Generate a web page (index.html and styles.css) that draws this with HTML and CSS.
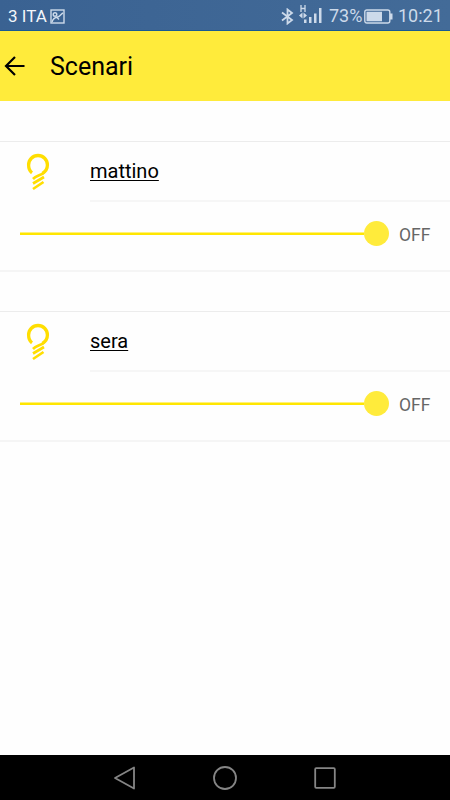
FILE: index.html
```html
<!DOCTYPE html>
<html lang="it">
<head>
    <meta charset="utf-8">
    <title>Scenari</title>
    <link rel="stylesheet" href="styles.css">
</head>
<body>
    <!-- status bar -->
    <div class="status-bar">
        <span class="carrier">3 ITA</span>
        <svg class="picture" width="15" height="15" viewBox="0 0 15 15">
            <rect x="1" y="1" width="13" height="13"/>
            <circle cx="5" cy="5.5" r="1.8"/>
            <path d="M2 13C3 9.500 5 8.500 7.500 8C10 7.500 11 5 13 4M7 8.500L9 10.500"/>
        </svg>
        <svg class="bluetooth" width="13" height="17" viewBox="0 0 13 17">
            <path d="M1 4.500L11 12L6.500 15.500V1.500L11 5L1 12.500"/>
        </svg>
        <svg class="signal" width="24" height="19" viewBox="0 0 24 19">
            <path d="M2 0V7M6 0V7M2 3.500H6" stroke-width="1.300"/>
            <path class="fill" d="M0 10.500L3.500 7.500V13.500ZM8 10.500L4.500 7.500V13.500ZM5 14.500H7.500V18H5ZM10 12H12.500V18H10ZM15 8.500H17.500V18H15ZM20 3H22.500V18H20Z"/>
        </svg>
        <span class="percent">73%</span>
        <svg class="battery" width="29" height="15" viewBox="0 0 29 15">
            <rect x="0.800" y="1" width="25" height="13" rx="2"/>
            <path class="fill" d="M2.500 2.800H18V12.200H2.500ZM26 4.500H28.500V10.500H26Z"/>
        </svg>
        <span class="clock">10:21</span>
    </div>

    <!-- header -->
    <header class="header">
        <svg class="back" width="22" height="22" viewBox="0 0 22 22">
            <path d="M20.500 11H2M11 2L2 11L11 20"/>
        </svg>
        <h1>Scenari</h1>
    </header>

    <!-- scenari -->
    <main class="content">
        <div class="card">
            <div class="card-title">
                <svg class="bulb" width="24" height="38" viewBox="0 0 24 38">
                    <path d="M6 19.800C3.500 18 2.600 15 2.600 12A9.400 9.500 0 0 1 21.400 12C21.400 15.500 19.800 18.300 16.500 20.300"/>
                    <path d="M18 19.500C14.500 22.800 10.500 22.500 7 26M18 24L7 30.500M17.500 29L7 36" stroke-width="2.700"/>
                </svg>
                <a class="name">mattino</a>
            </div>
            <div class="card-slider">
                <div class="slider">
                    <div class="track"></div>
                    <div class="thumb"></div>
                </div>
                <span class="state">OFF</span>
            </div>
        </div>

        <div class="card">
            <div class="card-title">
                <svg class="bulb" width="24" height="38" viewBox="0 0 24 38">
                    <path d="M6 19.800C3.500 18 2.600 15 2.600 12A9.400 9.500 0 0 1 21.400 12C21.400 15.500 19.800 18.300 16.500 20.300"/>
                    <path d="M18 19.500C14.500 22.800 10.500 22.500 7 26M18 24L7 30.500M17.500 29L7 36" stroke-width="2.700"/>
                </svg>
                <a class="name">sera</a>
            </div>
            <div class="card-slider">
                <div class="slider">
                    <div class="track"></div>
                    <div class="thumb"></div>
                </div>
                <span class="state">OFF</span>
            </div>
        </div>
    </main>

    <!-- navigation bar -->
    <nav class="nav-bar">
        <svg width="26" height="26" viewBox="0 0 26 26"><path d="M22 2.500V23.500L3 13Z"/></svg>
        <svg width="26" height="26" viewBox="0 0 26 26"><circle cx="13" cy="13" r="11"/></svg>
        <svg width="26" height="26" viewBox="0 0 26 26"><rect x="3.200" y="3.200" width="19.600" height="19.600" rx="1"/></svg>
    </nav>
</body>
</html>
```

FILE: styles.css
```css
:root {
    --yellow: #ffeb3b;
    --status: #cddaea;
}
* {
    box-sizing: border-box;
}
body {
    margin: 0;
    height: 800px;
    display: flex;
    flex-direction: column;
    background: #fefefe;
    font-family: Roboto, sans-serif;
    color: #000;
}
svg {
    display: block;
    flex: none;
    fill: none;
}
.status-bar {
    height: 31px;
    flex: none;
    display: flex;
    align-items: center;
    padding: 2px 8px 0;
    background: linear-gradient(to right, #3a6292, #436b98);
    border-bottom: 1px solid #185b94;
    color: var(--status);
    font-size: 18px;
    line-height: 30px;
    white-space: nowrap;
}
.status-bar svg {
    stroke: var(--status);
    stroke-width: 1.4;
}
.status-bar .bluetooth {
    margin-left: auto;
    stroke-width: 1.8;
}
.status-bar .fill {
    fill: var(--status);
    stroke: none;
}
.carrier {
    width: 42px;
    color: #f4f7fa;
    font-size: 17px;
}
.signal {
    margin: -3px 6px 0 5px;
}
.percent {
    width: 35px;
}
.battery {
    margin-right: 5px;
}
.clock {
    width: 44px;
}
.header {
    height: 70px;
    flex: none;
    display: flex;
    align-items: center;
    padding-left: 4px;
    background: var(--yellow);
}
.back {
    stroke: #000;
    stroke-width: 2.2;
}
.header h1 {
    margin: 2px 0 0 24px;
    font-size: 25px;
    font-weight: 400;
    line-height: 30px;
}
.content {
    flex: 1;
    padding-top: 40px;
}
.card {
    height: 131px;
    margin-bottom: 39px;
    border-top: 1px solid #ececec;
    border-bottom: 2px solid #f5f5f5;
}
.card-title {
    height: 60px;
    display: flex;
    padding-left: 26px;
}
.bulb {
    margin-top: 11px;
    stroke: #ffde00;
    stroke-width: 3.3;
}
.name {
    flex: 1;
    margin-left: 40px;
    padding-top: 16px;
    border-bottom: 2px solid #f6f6f6;
    font-size: 20px;
    line-height: 26px;
    text-decoration: underline;
    text-decoration-thickness: 1px;
    text-decoration-skip-ink: none;
    text-underline-offset: 2px;
}
.card-slider {
    height: 63px;
    display: flex;
    align-items: center;
    padding: 0 20px;
}
.slider {
    width: 369px;
    flex: none;
    display: flex;
    align-items: center;
}
.track {
    flex: 1;
    height: 3px;
    background: #ffe600;
    border-top: 1px solid #fff27a;
}
.thumb {
    width: 25px;
    height: 25px;
    border-radius: 50%;
    background: var(--yellow);
}
.state {
    margin: 3px 0 0 10px;
    color: #666;
    font-size: 17.5px;
}
.nav-bar {
    height: 45px;
    flex: none;
    display: flex;
    align-items: center;
    justify-content: center;
    gap: 74px;
    background: #000;
}
.nav-bar svg {
    stroke: #858585;
    stroke-width: 1.8;
    stroke-linejoin: round;
}
```
